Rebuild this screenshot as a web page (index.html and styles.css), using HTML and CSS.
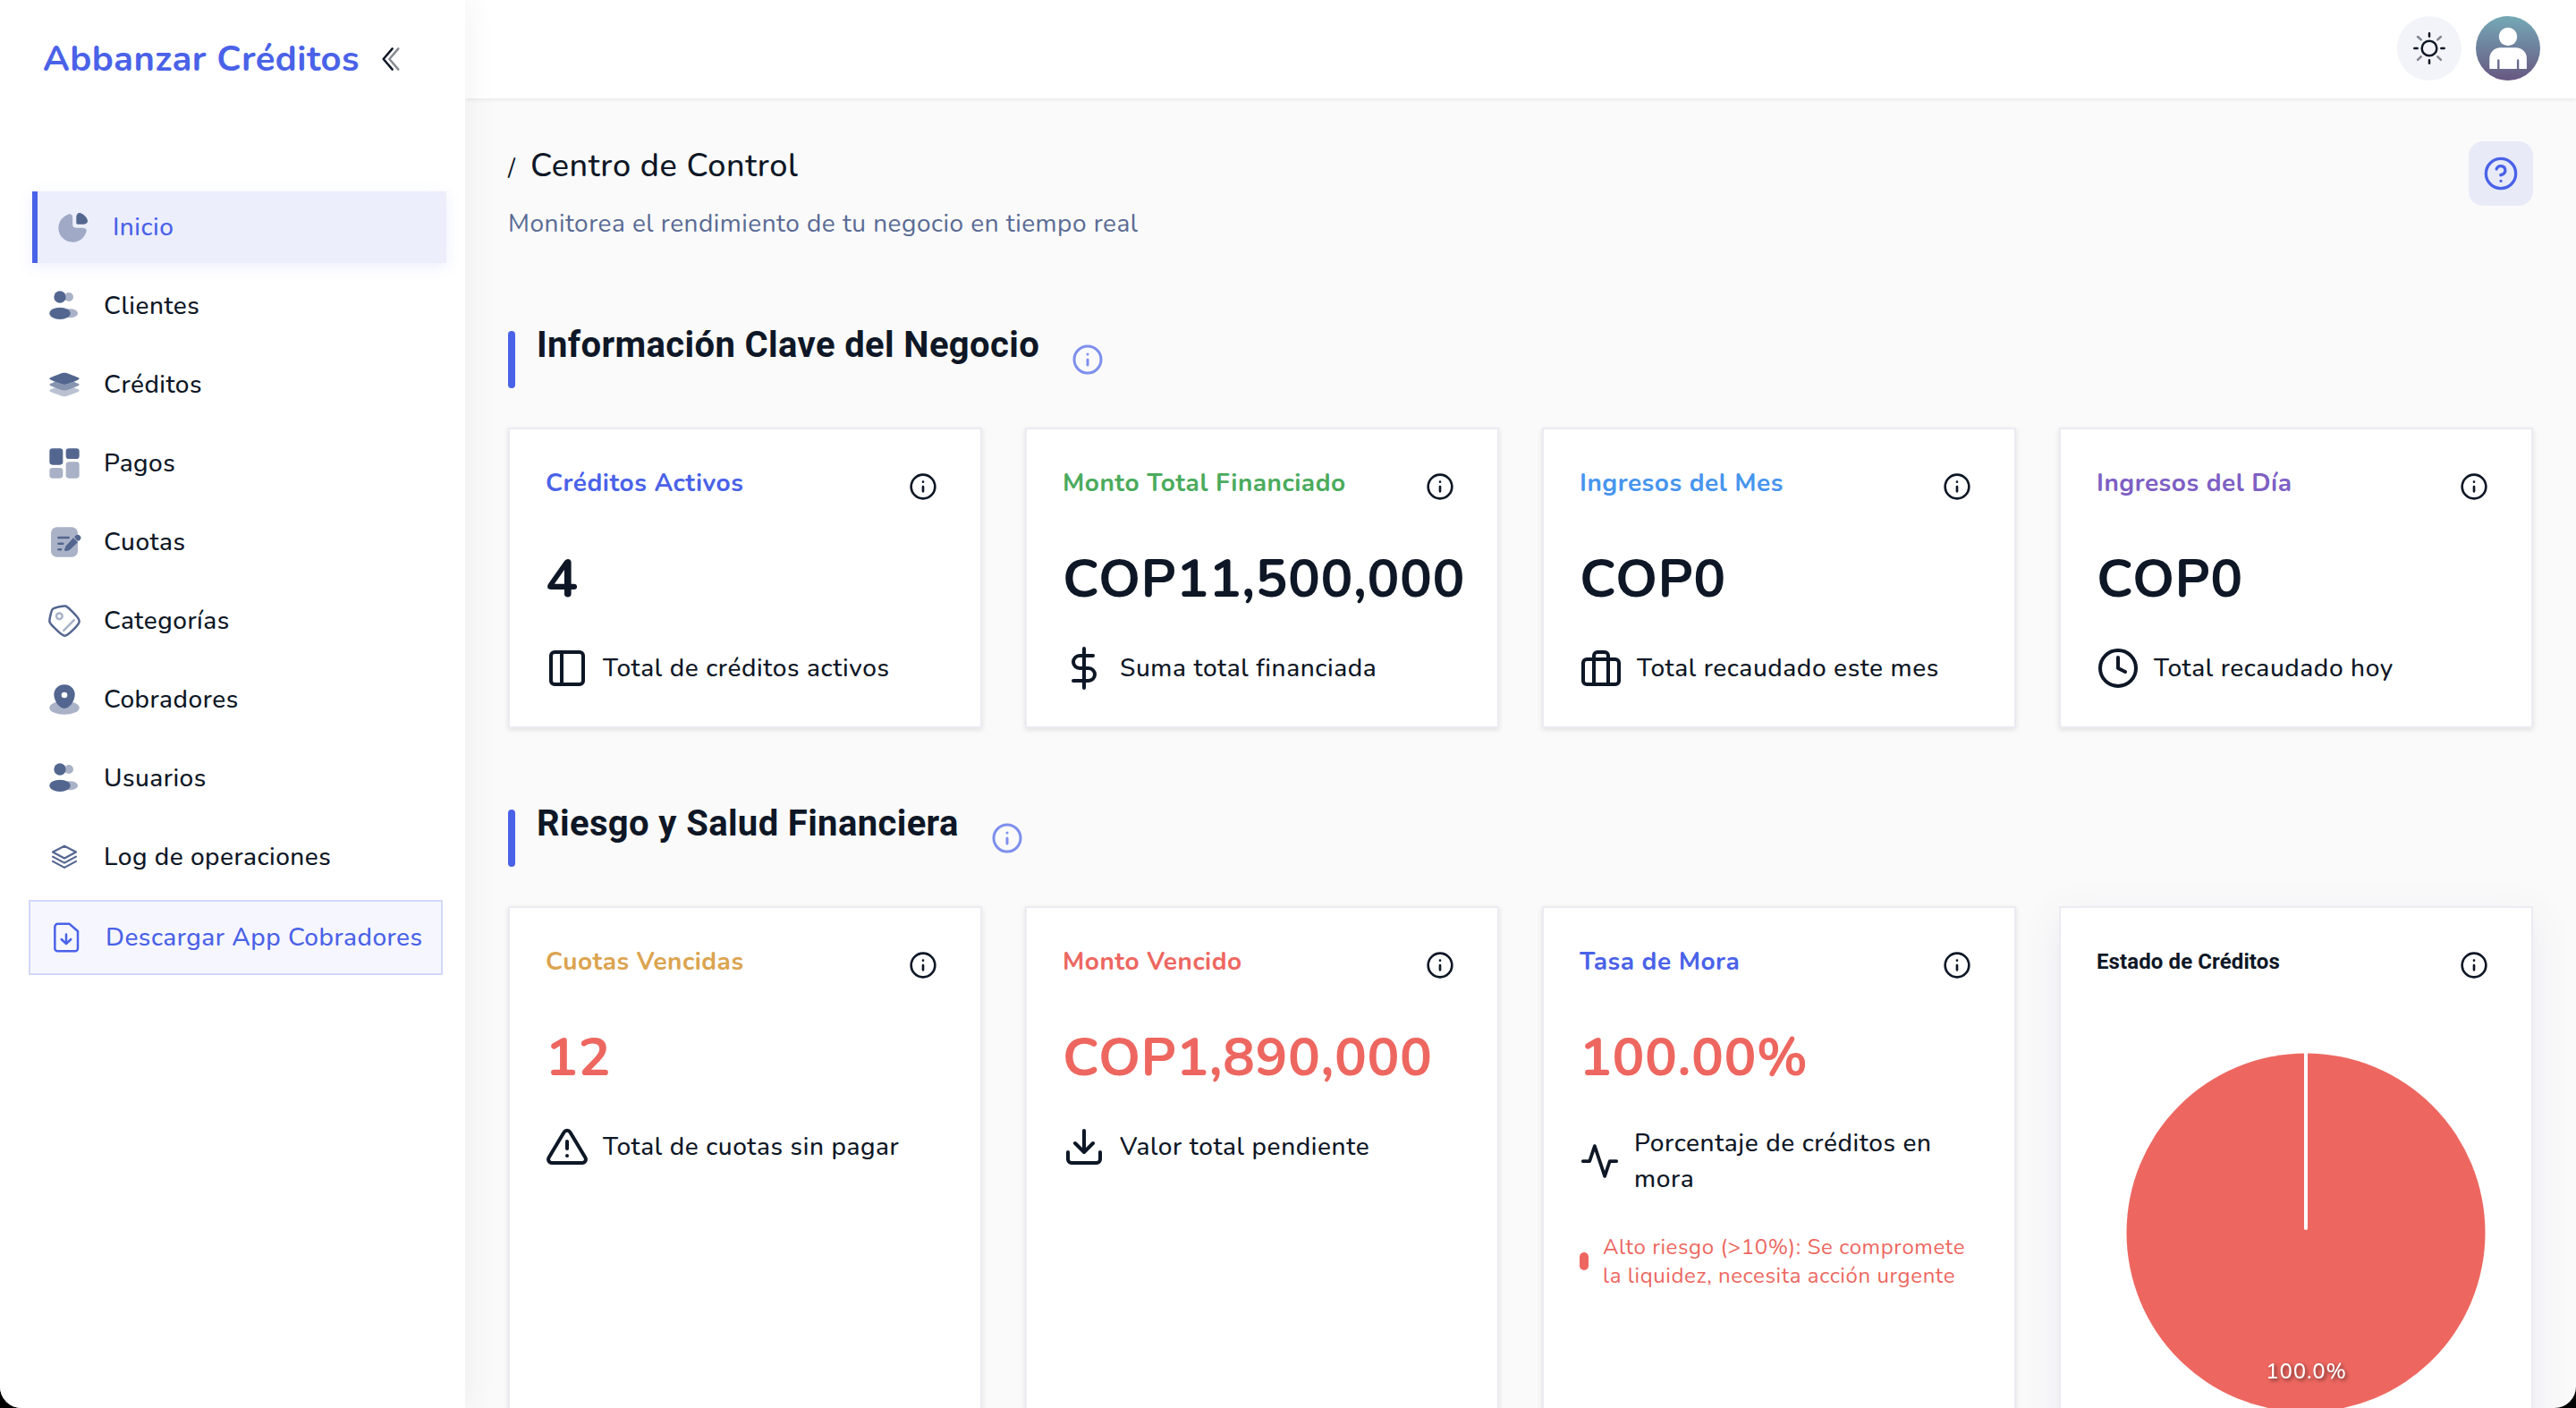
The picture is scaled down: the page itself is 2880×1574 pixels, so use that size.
FILE: index.html
```html
<!DOCTYPE html>
<html lang="es">
<head>
  <meta charset="UTF-8">
  <title>Abbanzar Créditos - Centro de Control</title>
  <link rel="stylesheet" href="styles.css">
</head>
<body>
  <!-- shared icons -->
  <svg class="sprite">
    <symbol id="info" viewBox="0 0 24 24">
      <circle cx="12" cy="12" r="10"/><path d="M12 16v-4M12 8h.01"/>
    </symbol>
    <symbol id="users" viewBox="0 0 24 24">
      <circle opacity=".5" cx="15" cy="6" r="3"/><ellipse opacity=".5" cx="16" cy="17" rx="5" ry="3"/>
      <circle cx="9" cy="6" r="4"/><ellipse cx="9" cy="17" rx="7" ry="4"/>
    </symbol>
  </svg>

  <div class="app">
    <aside class="sidebar">
      <div class="brand">
        <span class="brand-name">Abbanzar Créditos</span>
        <svg class="collapse" viewBox="0 0 24 24"><path d="M13 19L7 12L13 5"/><path opacity=".5" d="M17 19L11 12L17 5"/></svg>
      </div>
      <nav class="menu">
        <a class="item active">
          <svg viewBox="0 0 24 24">
            <path opacity=".5" d="M6.22 4.6C6.67 4.3 7.13 4.05 7.62 3.83C8.99 3.22 9.67 2.91 10.59 3.5C11.5 4.09 11.5 5.06 11.5 7V8.5C11.5 10.39 11.5 11.33 12.09 11.91C12.67 12.5 13.61 12.5 15.5 12.5H17C18.94 12.5 19.91 12.5 20.5 13.41C21.09 14.33 20.78 15.01 20.17 16.38C19.95 16.87 19.7 17.33 19.4 17.78C18.36 19.34 16.87 20.56 15.14 21.28C13.4 22 11.49 22.18 9.65 21.82C7.8 21.45 6.11 20.55 4.78 19.22C3.45 17.89 2.55 16.2 2.18 14.35C1.82 12.51 2 10.6 2.72 8.86C3.44 7.13 4.66 5.64 6.22 4.6Z"/>
            <path d="M21.45 7.07C20.63 5.01 18.99 3.37 16.93 2.55C15.39 1.95 14 3.34 14 5V9C14 9.55 14.45 10 15 10H19C20.66 10 22.05 8.61 21.45 7.07Z"/>
          </svg>
          <span>Inicio</span>
        </a>
        <a class="item"><svg><use href="#users"/></svg><span>Clientes</span></a>
        <a class="item">
          <svg viewBox="0 0 24 24">
            <path d="M4.98 9.69C2.99 8.89 2 8.49 2 8s.99-.89 2.98-1.69l2.81-1.12C9.77 4.4 10.77 4 12 4s2.23.4 4.21 1.19l2.81 1.12C21.01 7.11 22 7.51 22 8s-.99.89-2.98 1.69l-2.81 1.12C14.23 11.6 13.23 12 12 12s-2.23-.4-4.21-1.19z"/>
            <path opacity=".7" d="M5.76 10l-.78.31C2.99 11.11 2 11.51 2 12s.99.89 2.98 1.69l2.81 1.12C9.77 15.6 10.77 16 12 16s2.23-.4 4.21-1.19l2.81-1.12C21.01 12.89 22 12.49 22 12s-.99-.89-2.98-1.69L18.24 10l-2.03.81C14.23 11.6 13.23 12 12 12s-2.23-.4-4.21-1.19z"/>
            <path opacity=".4" d="M5.76 14l-.78.31C2.99 15.11 2 15.51 2 16s.99.89 2.98 1.69l2.81 1.12C9.77 19.6 10.77 20 12 20s2.23-.4 4.21-1.19l2.81-1.12C21.01 16.89 22 16.49 22 16s-.99-.89-2.98-1.69L18.24 14l-2.03.81C14.23 15.6 13.23 16 12 16s-2.23-.4-4.21-1.19z"/>
          </svg>
          <span>Créditos</span>
        </a>
        <a class="item">
          <svg viewBox="0 0 24 24">
            <rect x="2" y="2" width="9" height="11" rx="2"/><rect x="13" y="2" width="9" height="7" rx="2"/>
            <g opacity=".5"><rect x="2" y="15" width="9" height="7" rx="2"/><rect x="13" y="11" width="9" height="11" rx="2"/></g>
          </svg>
          <span>Pagos</span>
        </a>
        <a class="item">
          <svg viewBox="0 0 24 24">
            <rect opacity=".5" x="3" y="2" width="18" height="20" rx="4"/>
            <path d="M8 8.25h6.8a.75.75 0 010 1.5H8a.75.75 0 010-1.5zM8 12.25h3a.75.75 0 010 1.5H8a.75.75 0 010-1.5zM8 16.25h1.6a.75.75 0 010 1.5H8a.75.75 0 010-1.5z"/>
            <path d="M18 9.2l3 2.9-4.8 4.6c-.8.8-1.6 1-2.4 1.2-.9.3-1.3.1-1.5-.1s-.3-.7 0-1.5c.3-.8.5-1.5 1.3-2.3z"/>
            <path d="M18.8 8.4l.7-.7a2 2 0 012.9 2.9l-.7.7c-1.3-.3-2.5-1.5-2.9-2.9z"/>
          </svg>
          <span>Cuotas</span>
        </a>
        <a class="item">
          <svg class="line" viewBox="0 0 24 24">
            <path d="M4.73 16.14C3.18 14.59 2.41 13.82 2.12 12.82C1.84 11.81 2.08 10.75 2.57 8.62L2.86 7.39C3.27 5.6 3.48 4.7 4.09 4.09C4.7 3.48 5.6 3.27 7.39 2.86L8.62 2.57C10.75 2.08 11.81 1.84 12.82 2.12C13.82 2.41 14.59 3.18 16.14 4.73L17.97 6.56C20.66 9.25 22 10.59 22 12.26C22 13.93 20.66 15.28 17.97 17.97C15.28 20.66 13.93 22 12.26 22C10.59 22 9.25 20.66 6.56 17.97L4.73 16.14Z"/>
            <circle opacity=".5" cx="8.6" cy="8.9" r="2"/><path opacity=".5" d="M11.54 18.52L18.52 11.54"/>
          </svg>
          <span>Categorías</span>
        </a>
        <a class="item">
          <svg viewBox="0 0 24 24">
            <ellipse opacity=".5" cx="12" cy="17.5" rx="10" ry="4.5"/>
            <path d="M5 8.51C5 4.92 8.13 2 12 2s7 2.92 7 6.51c0 3.57-2.23 7.74-5.72 9.23a3.3 3.3 0 01-2.56 0C7.23 16.25 5 12.08 5 8.51z"/>
            <circle class="hole" cx="12" cy="9" r="2"/>
          </svg>
          <span>Cobradores</span>
        </a>
        <a class="item"><svg><use href="#users"/></svg><span>Usuarios</span></a>
        <a class="item">
          <svg class="line thin" viewBox="0 0 24 24"><path d="M12 4.7L19.8 8.7L12 12.9L4.2 8.7ZM4.2 11.8L12 16L19.8 11.8M4.2 14.9L12 19.1L19.8 14.9"/></svg>
          <span>Log de operaciones</span>
        </a>
        <a class="item download">
          <svg class="line" viewBox="0 0 24 24"><path d="M6.3 2.9H14.2L19.8 7.8V19.3A1.9 1.9 0 0117.9 21.2H6.3A1.9 1.9 0 014.4 19.3V4.8A1.9 1.9 0 016.3 2.9ZM12 9.9V16M8.8 13.2L12 16.2L15.2 13.2"/></svg>
          <span>Descargar App Cobradores</span>
        </a>
      </nav>
    </aside>

    <div class="page">
      <header class="topbar">
        <div class="theme">
          <svg viewBox="0 0 24 24"><circle cx="12" cy="12" r="5"/><path d="M12 2V4M12 20V22M4 12H2M22 12H20"/><path opacity=".5" d="M19.78 4.22L17.56 6.25M4.22 4.22L6.44 6.25M6.44 17.56L4.22 19.78M19.78 19.78L17.56 17.56"/></svg>
        </div>
        <svg class="avatar" viewBox="0 0 72 72">
          <defs><linearGradient id="sky" x2="0" y2="1"><stop stop-color="#75a9b6"/><stop offset="1" stop-color="#675781"/></linearGradient></defs>
          <circle cx="36" cy="36" r="36" fill="url(#sky)"/>
          <circle cx="36" cy="23" r="10.2" fill="#fff"/>
          <path fill="#fff" d="M15.3 59V47.5A12 12 0 0127.3 35.3H44.7A12 12 0 0156.9 47.5V59H48.3V49.5A1.2 1.2 0 0045.9 49.5V59H26.5V49.5A1.2 1.2 0 0024.1 49.5V59Z"/>
        </svg>
      </header>

      <main class="content">
        <div class="head">
          <div>
            <div class="crumb"><span class="slash">/</span><h1>Centro de Control</h1></div>
            <p class="subtitle">Monitorea el rendimiento de tu negocio en tiempo real</p>
          </div>
          <div class="help">
            <svg viewBox="0 0 24 24"><circle cx="12" cy="12" r="10"/><path d="M9.09 9a3 3 0 015.83 1c0 2-3 3-3 3M12 17h.01"/></svg>
          </div>
        </div>

        <section>
          <div class="section-head"><i class="bar"></i><h2>Información Clave del Negocio</h2><svg class="section-info"><use href="#info"/></svg></div>
          <div class="cards">
            <div class="card">
              <div class="card-head"><h3 class="primary">Créditos Activos</h3><svg class="info"><use href="#info"/></svg></div>
              <div class="value">4</div>
              <div class="note">
                <svg viewBox="0 0 24 24"><rect x="3" y="3" width="18" height="18" rx="2"/><path d="M9 3v18"/></svg>
                <span>Total de créditos activos</span>
              </div>
            </div>
            <div class="card">
              <div class="card-head"><h3 class="success">Monto Total Financiado</h3><svg class="info"><use href="#info"/></svg></div>
              <div class="value">COP11,500,000</div>
              <div class="note">
                <svg viewBox="0 0 24 24"><path d="M12 1v22M17 5H9.5a3.5 3.5 0 000 7h5a3.5 3.5 0 010 7H6"/></svg>
                <span>Suma total financiada</span>
              </div>
            </div>
            <div class="card">
              <div class="card-head"><h3 class="sky">Ingresos del Mes</h3><svg class="info"><use href="#info"/></svg></div>
              <div class="value">COP0</div>
              <div class="note">
                <svg viewBox="0 0 24 24"><rect x="2" y="7" width="20" height="14" rx="2"/><path d="M16 21V5a2 2 0 00-2-2h-4a2 2 0 00-2 2v16"/></svg>
                <span>Total recaudado este mes</span>
              </div>
            </div>
            <div class="card">
              <div class="card-head"><h3 class="purple">Ingresos del Día</h3><svg class="info"><use href="#info"/></svg></div>
              <div class="value">COP0</div>
              <div class="note">
                <svg viewBox="0 0 24 24"><circle cx="12" cy="12" r="10"/><path d="M12 6v6l4 2"/></svg>
                <span>Total recaudado hoy</span>
              </div>
            </div>
          </div>
        </section>

        <section>
          <div class="section-head"><i class="bar"></i><h2>Riesgo y Salud Financiera</h2><svg class="section-info"><use href="#info"/></svg></div>
          <div class="cards risk">
            <div class="card">
              <div class="card-head"><h3 class="warning">Cuotas Vencidas</h3><svg class="info"><use href="#info"/></svg></div>
              <div class="value danger">12</div>
              <div class="note">
                <svg viewBox="0 0 24 24"><path d="M10.29 3.86L1.82 18a2 2 0 001.71 3h16.94a2 2 0 001.71-3L13.71 3.86a2 2 0 00-3.42 0zM12 9v4M12 17h.01"/></svg>
                <span>Total de cuotas sin pagar</span>
              </div>
            </div>
            <div class="card">
              <div class="card-head"><h3 class="danger">Monto Vencido</h3><svg class="info"><use href="#info"/></svg></div>
              <div class="value danger">COP1,890,000</div>
              <div class="note">
                <svg viewBox="0 0 24 24"><path d="M21 15v4a2 2 0 01-2 2H5a2 2 0 01-2-2v-4M7 10l5 5 5-5M12 15V3"/></svg>
                <span>Valor total pendiente</span>
              </div>
            </div>
            <div class="card">
              <div class="card-head"><h3 class="primary">Tasa de Mora</h3><svg class="info"><use href="#info"/></svg></div>
              <div class="value danger">100.00%</div>
              <div class="note wide">
                <svg viewBox="0 0 24 24"><path d="M22 12h-4l-3 9L9 3l-3 9H2"/></svg>
                <span>Porcentaje de créditos en mora</span>
              </div>
              <div class="alert"><i class="dot"></i><span>Alto riesgo (&gt;10%): Se compromete la liquidez, necesita acción urgente</span></div>
            </div>
            <div class="card chart">
              <div class="card-head"><h4>Estado de Créditos</h4><svg class="info"><use href="#info"/></svg></div>
              <svg class="pie" viewBox="0 0 404 404">
                <circle cx="202" cy="201" r="200.5" fill="#ed6760"/>
                <path d="M202 0V196" stroke="#fff" stroke-width="4" stroke-linecap="round"/>
                <text x="202.5" y="364" text-anchor="middle">100.0%</text>
              </svg>
            </div>
          </div>
        </section>
      </main>
    </div>
  </div>
</body>
</html>
```
FILE: styles.css
```css
* { box-sizing: border-box; }
html, body { height: 100%; }
body {
  margin: 0;
  background: #000;
  color: #0e1726;
  font-family: Nunito, Lato, sans-serif;
  font-size: 28px;
  font-weight: 500;
  letter-spacing: 0.5px;
  overflow: hidden;
}
h1, h2, h3, h4, p { margin: 0; }
svg { display: block; flex: none; }
.sprite { position: absolute; width: 0; height: 0; }

.app {
  display: flex;
  height: 1574px;
  overflow: hidden;
  border-radius: 0 0 24px 24px;
  background: #fafafa;
}

/* sidebar */
.sidebar {
  position: relative;
  z-index: 2;
  flex: none;
  width: 520px;
  background: #fff;
  box-shadow: 6px 0 28px rgba(60, 60, 60, 0.06);
}
.brand {
  display: flex;
  align-items: center;
  height: 132px;
  padding-left: 48px;
}
.brand-name {
  width: 369px;
  color: #4a62e8;
  font-size: 40px;
  font-weight: 700;
  letter-spacing: 0.45px;
  white-space: nowrap;
}
.collapse {
  width: 40px;
  height: 40px;
  fill: none;
  stroke: #0e1726;
  stroke-width: 1.5;
  stroke-linecap: round;
  stroke-linejoin: round;
}
.menu {
  display: flex;
  flex-direction: column;
  gap: 8px;
  width: 463px;
  margin: 82px 0 0 32px;
}
.item {
  display: flex;
  align-items: center;
  gap: 24px;
  height: 80px;
  padding-left: 20px;
  white-space: nowrap;
}
.item svg { width: 40px; height: 40px; fill: #53668f; }
.item .hole { fill: #fff; }
.item .line {
  fill: none;
  stroke: #53668f;
  stroke-width: 1.5;
  stroke-linecap: round;
  stroke-linejoin: round;
}
.item .thin { stroke-width: 1.3; }
.active {
  margin: 0 -4px 0 4px;
  border-left: 6px solid #4a62e8;
  background: #eceefc;
  color: #4a62e8;
  box-shadow: 0 4px 16px rgba(74, 98, 232, 0.1);
}
.download {
  height: 84px;
  border: 2px solid #d2d8f9;
  background: #f6f7fe;
  color: #4a62e8;
}
.item.download svg { stroke: #4a62e8; }

/* top bar */
.page { flex: 1; min-width: 0; }
.topbar {
  display: flex;
  justify-content: flex-end;
  gap: 16px;
  height: 110px;
  padding: 18px 40px;
  background: #fff;
  box-shadow: 0 1px 5px rgba(0, 0, 0, 0.09);
}
.theme {
  display: flex;
  align-items: center;
  justify-content: center;
  width: 72px;
  height: 72px;
  border-radius: 50%;
  background: #f3f4f9;
}
.theme svg, .help svg {
  width: 40px;
  height: 40px;
  fill: none;
  stroke: #0e1726;
  stroke-width: 1.5;
  stroke-linecap: round;
}
.avatar { width: 72px; height: 72px; }

/* content */
.content { padding: 48px; }
.head {
  display: flex;
  justify-content: space-between;
  height: 212px;
}
.crumb { display: flex; height: 50px; line-height: 55px; }
.slash { width: 25px; padding-top: 3px; font-weight: 400; }
.crumb h1 {
  font-size: 36px;
  font-weight: 500;
  letter-spacing: 0.65px;
}
.subtitle {
  margin-top: 22px;
  color: #596b94;
  font-weight: 400;
  line-height: 40px;
}
.help {
  display: flex;
  align-items: center;
  justify-content: center;
  width: 72px;
  height: 72px;
  border-radius: 16px;
  background: #e8eaf7;
}
.help svg { stroke: #4a62e8; stroke-width: 2; }

.section-head {
  display: flex;
  align-items: center;
  height: 64px;
  margin-bottom: 44px;
}
.bar {
  width: 8px;
  height: 64px;
  margin-right: 24px;
  border-radius: 4px;
  background: #4a62e8;
}
.section-head h2 {
  align-self: flex-start;
  font-family: Roboto, sans-serif;
  font-size: 40px;
  font-weight: 700;
  line-height: 32px;
  letter-spacing: 0.37px;
}
.section-info {
  width: 36px;
  height: 36px;
  margin-left: 36px;
  fill: none;
  stroke: #4a62e8;
  stroke-width: 2;
  stroke-linecap: round;
  opacity: 0.7;
}

.cards {
  display: grid;
  grid-template-columns: repeat(4, minmax(0, 1fr));
  gap: 48px;
  margin-bottom: 91px;
}
.card {
  height: 336px;
  padding: 40px;
  border: 2px solid #ebecf2;
  background: #fff;
  box-shadow: 0 2px 6px rgba(0, 0, 0, 0.1);
}
.risk .card { height: 640px; }
.risk .chart { box-shadow: 0 12px 40px rgba(94, 92, 154, 0.1); }
.card-head {
  display: flex;
  justify-content: space-between;
  height: 40px;
}
.card-head h3 {
  font-size: 28px;
  font-weight: 700;
  line-height: 40px;
}
.card-head h4 {
  font-family: Roboto, sans-serif;
  font-size: 24px;
  font-weight: 700;
  line-height: 40px;
  letter-spacing: 0.1px;
}
.info {
  width: 32px;
  height: 32px;
  margin: 8px 8px 0 0;
  fill: none;
  stroke: #0e1726;
  stroke-width: 2;
  stroke-linecap: round;
}
.primary { color: #4a62e8; }
.success { color: #4bab5c; }
.sky { color: #4795ee; }
.purple { color: #7e5fc4; }
.warning { color: #dba450; }
.danger { color: #ed6760; }
.value {
  margin-top: 48px;
  font-size: 60px;
  font-weight: 700;
  line-height: 78px;
  letter-spacing: 0.5px;
  white-space: nowrap;
}
.note {
  display: flex;
  align-items: center;
  gap: 16px;
  margin-top: 37px;
  line-height: 40px;
  letter-spacing: 0.6px;
}
.note svg {
  width: 48px;
  height: 48px;
  fill: none;
  stroke: #0e1726;
  stroke-width: 2;
  stroke-linecap: round;
  stroke-linejoin: round;
}
.note.wide svg { width: 45px; }
.alert {
  display: flex;
  align-items: center;
  gap: 16px;
  margin-top: 40px;
  color: #ed6760;
  font-size: 24px;
  font-weight: 400;
  line-height: 32px;
  letter-spacing: 0.6px;
}
.dot {
  flex: none;
  width: 10px;
  height: 20px;
  border-radius: 5px;
  background: #ed6760;
}
.pie {
  width: 404px;
  height: 404px;
  margin: 82px 0 0 32px;
}
.pie text {
  fill: #fff;
  font-size: 24px;
  letter-spacing: 0.8px;
  filter: drop-shadow(2px 2px 2px rgba(0, 0, 0, 0.55));
}
```
